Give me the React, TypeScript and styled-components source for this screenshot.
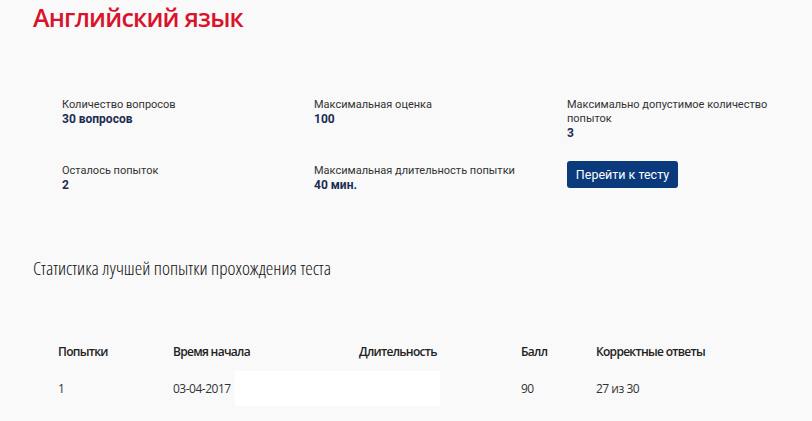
import styled, { createGlobalStyle } from 'styled-components'

const GlobalStyle = createGlobalStyle`
  html, body {
    margin: 0;
    padding: 0;
    background: #f9f9f9;
  }
  body {
    font-family: 'Open Sans', 'Noto Sans', sans-serif;
    color: #222;
  }
`

type InfoItem = { label: string; value: string }

const firstRow: InfoItem[] = [
  { label: 'Количество вопросов', value: '30 вопросов' },
  { label: 'Максимальная оценка', value: '100' },
  { label: 'Максимально допустимое количество попыток', value: '3' },
]

const secondRow: InfoItem[] = [
  { label: 'Осталось попыток', value: '2' },
  { label: 'Максимальная длительность попытки', value: '40 мин.' },
]

const columns = ['Попытки', 'Время начала', 'Длительность', 'Балл', 'Корректные ответы']

export default function App() {
  return (
    <Page>
      <GlobalStyle />
      <Title>Английский язык</Title>
      <InfoGrid>
        {[...firstRow, ...secondRow].map(item => (
          <InfoCell key={item.label}>
            <Label>{item.label}</Label>
            <Value>{item.value}</Value>
          </InfoCell>
        ))}
        <InfoCell>
          <StartButton type='button'>Перейти к тесту</StartButton>
        </InfoCell>
      </InfoGrid>
      <SectionTitle>Статистика лучшей попытки прохождения теста</SectionTitle>
      <Table>
        <thead>
          <tr>
            {columns.map(c => (
              <Th key={c}>{c}</Th>
            ))}
          </tr>
        </thead>
        <tbody>
          <tr>
            <Td>1</Td>
            <Td>03-04-2017</Td>
            <Td>
              <Redacted />
            </Td>
            <Td>90</Td>
            <Td>27 из 30</Td>
          </tr>
        </tbody>
      </Table>
    </Page>
  )
}

const Page = styled.div`
  width: 812px;
  height: 421px;
  overflow: hidden;
  padding: 0 0 0 33px;
  box-sizing: border-box;
`

const Title = styled.h1`
  margin: 0;
  font-family: 'Open Sans', sans-serif;
  font-weight: 600;
  font-size: 25px;
  line-height: 34px;
  letter-spacing: -0.8px;
  color: #d8142c;
`

const InfoGrid = styled.div`
  display: grid;
  grid-template-columns: 252px 253px 215px;
  grid-template-rows: 66px 60px;
  padding: 64px 0 0 29px;
`

const InfoCell = styled.div`
  display: flex;
  flex-direction: column;
  align-items: flex-start;
`

const Label = styled.div`
  font-family: Roboto, 'Open Sans', sans-serif;
  font-size: 11px;
  line-height: 14px;
  color: #333;
  max-width: 212px;
`

const Value = styled.div`
  font-family: Roboto, 'Open Sans', sans-serif;
  font-size: 12px;
  line-height: 15px;
  font-weight: 700;
  color: #1c2d52;
`

const StartButton = styled.button`
  margin-top: -3px;
  width: 111px;
  height: 27px;
  padding: 0;
  border: none;
  border-radius: 3px;
  background: #0b3a7c;
  color: #fff;
  font-family: Roboto, 'Open Sans', sans-serif;
  font-size: 12.5px;
  cursor: pointer;
`

const SectionTitle = styled.h2`
  margin: 0;
  padding-top: 30px;
  font-family: 'Open Sans', sans-serif;
  font-weight: 300;
  font-stretch: 75%;
  font-size: 19px;
  line-height: 28px;
  color: #111;
`

const Table = styled.table`
  margin: 59px 0 0 25px;
  border-collapse: collapse;
  font-family: 'Open Sans', sans-serif;
  font-size: 12px;
`

const Th = styled.th`
  text-align: left;
  font-weight: 600;
  letter-spacing: -0.7px;
  padding: 0;
  height: 20px;
  color: #222;
  &:nth-child(1) { width: 115px; }
  &:nth-child(2) { width: 186px; }
  &:nth-child(3) { width: 162px; }
  &:nth-child(4) { width: 75px; }
`

const Td = styled.td`
  position: relative;
  padding: 0;
  height: 54px;
  font-weight: 400;
  letter-spacing: -0.5px;
  color: #333;
  vertical-align: middle;
`

/* white patch that hides part of the row in the screenshot */
const Redacted = styled.div`
  position: absolute;
  left: -124px;
  top: 10px;
  width: 205px;
  height: 35px;
  background: #fff;
`
